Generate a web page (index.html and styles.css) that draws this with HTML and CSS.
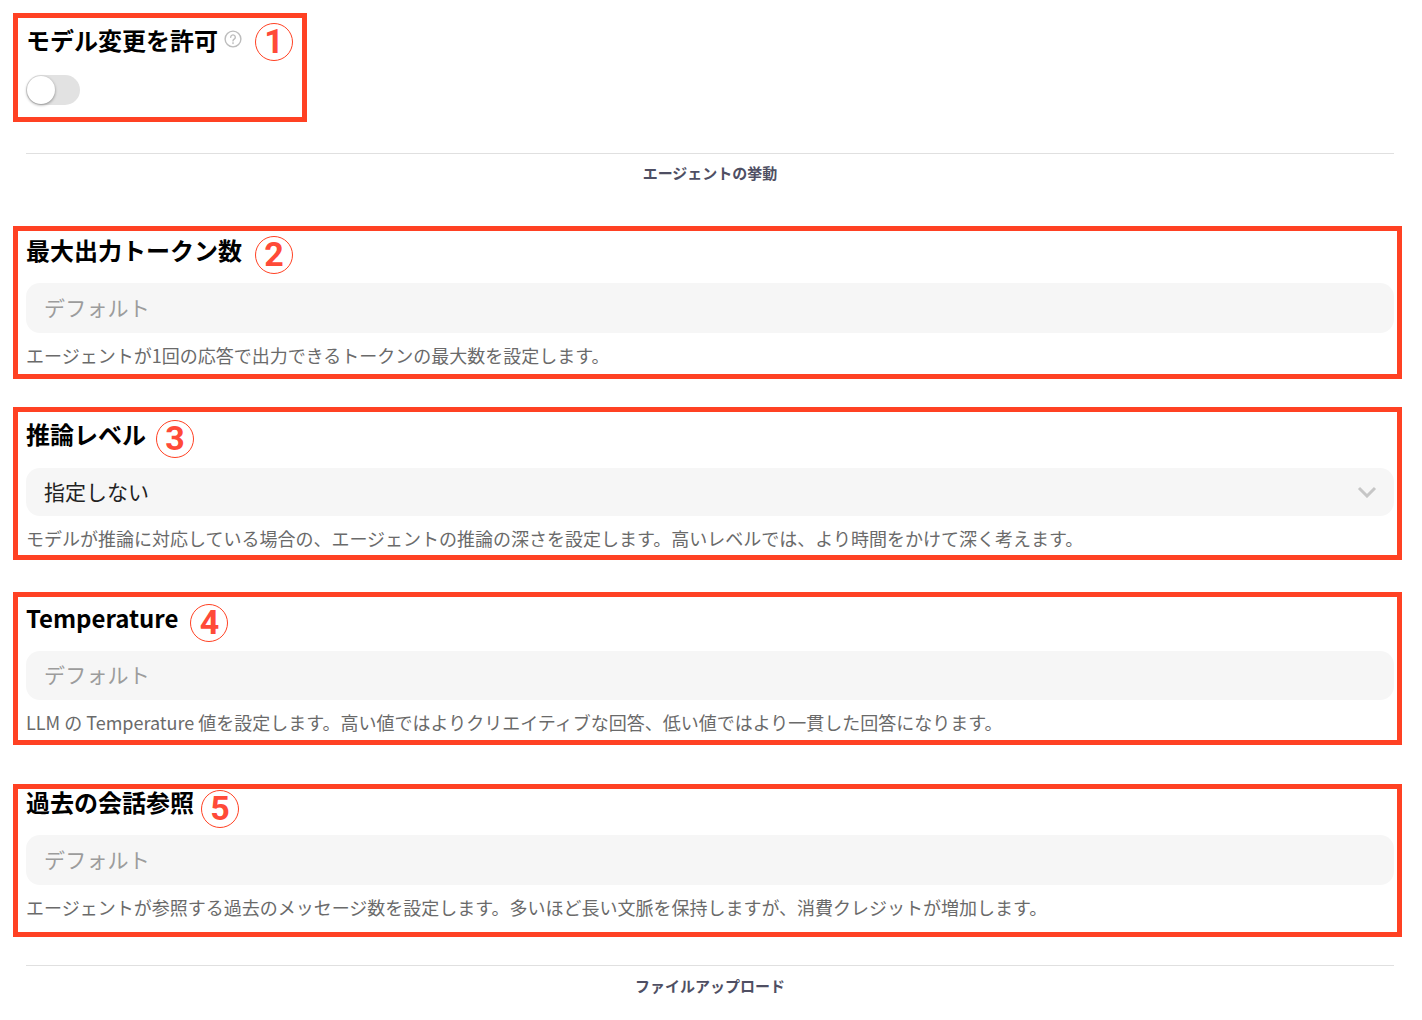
FILE: index.html
```html
<!DOCTYPE html>
<html lang="ja">
<head>
<meta charset="utf-8">
<title>エージェント設定</title>
<link rel="stylesheet" href="styles.css">
</head>
<body>
<main class="page">
  <section class="box box-1">
    <div class="title-row">
      <h3 class="label">モデル変更を許可</h3>
      <svg class="help" viewBox="0 0 18 18" aria-hidden="true"><circle cx="9" cy="9" r="7.9"/><path d="M6.7 7.2a2.3 2.3 0 1 1 3.5 2c-.8.5-1.2.9-1.2 1.7"/><path d="M9 12.7v.8"/></svg>
      <span class="num">1</span>
    </div>
    <div class="switch"><span class="knob"></span></div>
  </section>

  <div class="divider div-a"><span>エージェントの挙動</span></div>

  <section class="box box-2">
    <div class="title-row">
      <h3 class="label">最大出力トークン数</h3>
      <span class="num">2</span>
    </div>
    <div class="field placeholder">デフォルト</div>
    <p class="desc">エージェントが1回の応答で出力できるトークンの最大数を設定します。</p>
  </section>

  <section class="box box-3">
    <div class="title-row">
      <h3 class="label">推論レベル</h3>
      <span class="num">3</span>
    </div>
    <div class="field select">
      <span>指定しない</span>
      <svg class="chev" viewBox="0 0 20 12" aria-hidden="true"><path d="M2 2l8 8 8-8"/></svg>
    </div>
    <p class="desc">モデルが推論に対応している場合の、エージェントの推論の深さを設定します。高いレベルでは、より時間をかけて深く考えます。</p>
  </section>

  <section class="box box-4">
    <div class="title-row">
      <h3 class="label">Temperature</h3>
      <span class="num">4</span>
    </div>
    <div class="field placeholder">デフォルト</div>
    <p class="desc">LLM の Temperature 値を設定します。高い値ではよりクリエイティブな回答、低い値ではより一貫した回答になります。</p>
  </section>

  <section class="box box-5">
    <div class="title-row">
      <h3 class="label">過去の会話参照</h3>
      <span class="num">5</span>
    </div>
    <div class="field placeholder">デフォルト</div>
    <p class="desc">エージェントが参照する過去のメッセージ数を設定します。多いほど長い文脈を保持しますが、消費クレジットが増加します。</p>
  </section>

  <div class="divider div-b"><span>ファイルアップロード</span></div>
</main>
</body>
</html>
```
FILE: styles.css
```css
* { box-sizing: border-box; }
html, body { margin: 0; padding: 0; background: #fff; }
body {
  height: 1020px;
  overflow: hidden;
  font-family: "Noto Sans CJK JP", "Noto Sans", sans-serif;
  color: #000;
}
.page {
  display: flex;
  flex-direction: column;
  align-items: flex-start;
  padding: 13px 0 0 13px;
}
.box {
  width: 1389px;
  height: 153px;
  border: 5px solid #ff4123;
  padding: 0 3px 0 8px;
  display: flex;
  flex-direction: column;
}
.box-1 { width: 294px; height: 109px; }
.box-3 { margin-top: 28px; }
.box-4 { margin-top: 32px; }
.box-5 { margin-top: 39px; }
.title-row {
  display: flex;
  align-items: center;
  flex: none;
  height: 34px;
}
.box-1 .title-row { margin-top: 5px; }
.box-2 .title-row { margin-top: 2px; }
.box-3 .title-row { margin-top: 5px; }
.box-4 .title-row { margin-top: 4px; }
.box-5 .title-row { margin-top: -4px; }
.label {
  margin: 0;
  font-size: 24px;
  line-height: 34px;
  font-weight: 700;
  white-space: nowrap;
}
.help {
  flex: none;
  width: 18px;
  height: 18px;
  margin: -3px 0 0 6px;
  fill: none;
  stroke: #bcbcbc;
  stroke-width: 1.4;
  stroke-linecap: round;
}
.num {
  flex: none;
  width: 38px;
  height: 38px;
  border: 1.5px solid #ff4123;
  border-radius: 50%;
  color: #ff4a38;
  font-family: Roboto, "Liberation Sans", sans-serif;
  font-weight: 700;
  font-size: 34px;
  line-height: 35px;
  text-align: center;
  margin-top: 5px;
  margin-bottom: -5px;
}
.box-1 .num { margin: 2px 0 -2px 13px; }
.box-2 .num { margin-left: 13px; }
.box-3 .num { margin-left: 10px; }
.box-4 .num { margin-left: 12px; }
.box-5 .num { margin: 7px 0 -7px 7px; }
.switch {
  width: 54px;
  height: 30px;
  margin-top: 18px;
  border-radius: 15px;
  background: #e2e2e2;
  padding: 1px;
}
.knob {
  display: block;
  width: 28px;
  height: 28px;
  border-radius: 50%;
  background: #fff;
  box-shadow: 0 1px 3px rgba(0, 0, 0, .4);
}
.divider {
  width: 1368px;
  margin-left: 13px;
  border-top: 1px solid #e0e0e0;
  text-align: center;
  font-size: 15px;
  line-height: 20px;
  font-weight: 700;
  color: #4f4f63;
}
.divider span { display: block; padding-top: 10px; }
.div-a { margin-top: 31px; height: 73px; }
.div-a span { padding-top: 9px; }
.div-b { margin-top: 28px; }
.field {
  flex: none;
  height: 50px;
  margin-top: 16px;
  border-radius: 14px;
  background: #f6f6f6;
  padding: 0 18px 3px;
  display: flex;
  align-items: center;
  font-size: 21px;
  letter-spacing: .2px;
  justify-content: space-between;
}
.box-3 .field { margin-top: 17px; height: 48px; }
.box-4 .field { height: 49px; }
.placeholder { color: #9c9c9c; }
.select { color: #222; letter-spacing: 0; }
.chev {
  flex: none;
  width: 20px;
  height: 12px;
  margin: 3px -1px 0 0;
  fill: none;
  stroke: #c6c6c6;
  stroke-width: 3;
}
.desc {
  margin: 9px 0 0;
  font-size: 18px;
  line-height: 26px;
  color: #6a6a6a;
  white-space: nowrap;
}
```
